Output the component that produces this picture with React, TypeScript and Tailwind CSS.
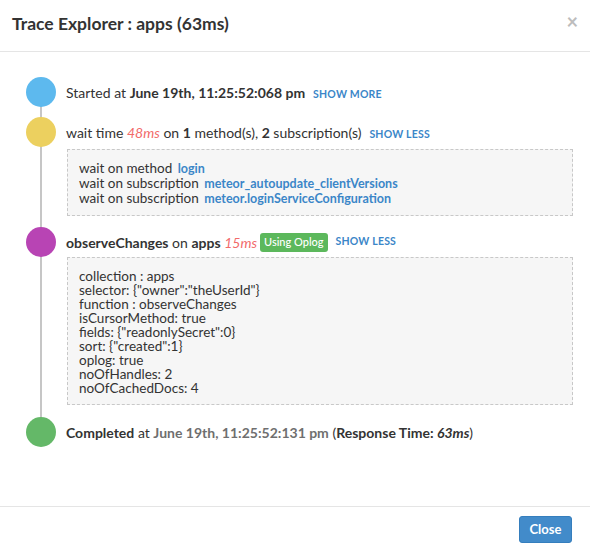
import React from "react";

const font = { fontFamily: "Lato, 'Noto Sans', sans-serif" };

function Link({ children }: { children: React.ReactNode }) {
  return (
    <span className="ml-[8px] text-[10.5px] font-bold uppercase tracking-[0.2px] text-[#3b86c8]">
      {children}
    </span>
  );
}

function Dot({ color }: { color: string }) {
  return <div className={`w-[30px] h-[30px] rounded-full shrink-0 ${color}`} />;
}

const cursorInfo = [
  "collection : apps",
  'selector: {"owner":"theUserId"}',
  "function : observeChanges",
  "isCursorMethod: true",
  'fields: {"readonlySecret":0}',
  'sort: {"created":1}',
  "oplog: true",
  "noOfHandles: 2",
  "noOfCachedDocs: 4",
];

export default function App() {
  return (
    <div className="w-[590px] h-[558px] bg-white text-[#333] overflow-hidden" style={font}>
      {/* Header */}
      <div className="h-[52px] border-b border-[#e5e5e5] flex items-center justify-between pl-3 pr-[12px]">
        <h4 className="text-[17.5px] font-bold leading-none text-[#333] -mt-[4px]">Trace Explorer : apps (63ms)</h4>
        <span className="text-[20px] font-bold leading-none text-[#bdbdbd] -mt-[9px]">×</span>
      </div>

      {/* Timeline */}
      <div className="relative h-[454px] pl-[26px] pr-[17px] pt-[25px] text-[14px]">
        <div className="absolute left-[40px] top-[40px] h-[340px] w-[2px] bg-[#c6c6c6]" />

        <div className="relative flex items-center h-[30px]">
          <Dot color="bg-[#5db9ee]" />
          <div className="ml-[10px]">
            Started at <b>June 19th, 11:25:52:068 pm</b>
            <Link>Show more</Link>
          </div>
        </div>

        <div className="relative flex items-center h-[30px] mt-[10px]">
          <Dot color="bg-[#ecd05f]" />
          <div className="ml-[10px]">
            wait time <i className="text-[#f26a6a]">48ms</i> on <b>1</b> method(s), <b>2</b> subscription(s)
            <Link>Show less</Link>
          </div>
        </div>

        <div className="relative ml-[41px] mt-[2px] border border-dashed border-[#c8c8c8] bg-[#f6f6f6] pl-[11px] pt-[11px] pb-[9px] text-[13.5px] leading-[14px]">
          <div>
            wait on method <span className="ml-[2px] text-[12.5px] font-bold text-[#3b86c8]">login</span>
          </div>
          <div>
            wait on subscription{" "}
            <span className="ml-[2px] text-[12.5px] font-bold text-[#3b86c8]">meteor_autoupdate_clientVersions</span>
          </div>
          <div>
            wait on subscription{" "}
            <span className="ml-[2px] text-[12.5px] font-bold text-[#3b86c8]">meteor.loginServiceConfiguration</span>
          </div>
        </div>

        <div className="relative flex items-center h-[30px] mt-[11px]">
          <Dot color="bg-[#b844b4]" />
          <div className="ml-[10px] flex items-center">
            <span>
              <b>observeChanges</b> on <b>apps</b> <i className="text-[#f26a6a]">15ms</i>
            </span>
            <span className="ml-[3px] rounded-[3px] bg-[#5cb85c] px-[4px] h-[19px] flex items-center text-[11px] font-medium text-white">
              Using Oplog
            </span>
            <Link>Show less</Link>
          </div>
        </div>

        <div className="relative ml-[41px] border border-dashed border-[#c8c8c8] bg-[#f6f6f6] pl-[11px] pt-[11px] pb-[9px] text-[13.5px] leading-[14px]">
          {cursorInfo.map((line) => (
            <div key={line}>{line}</div>
          ))}
        </div>

        <div className="relative flex items-center h-[30px] mt-[12px]">
          <Dot color="bg-[#64b868]" />
          <div className="ml-[10px]">
            <b>Completed</b> at <b className="text-[#6f6f6f]">June 19th, 11:25:52:131 pm</b> (
            <b>
              Response Time: <i>63ms</i>
            </b>
            )
          </div>
        </div>
      </div>

      {/* Footer */}
      <div className="border-t border-[#e5e5e5] flex justify-end pr-[18px] pt-[9px]">
        <button className="h-[27px] w-[53px] rounded-[3px] border border-[#357ebd] bg-[#428bca] text-[13px] font-bold text-white">
          Close
        </button>
      </div>
    </div>
  );
}
